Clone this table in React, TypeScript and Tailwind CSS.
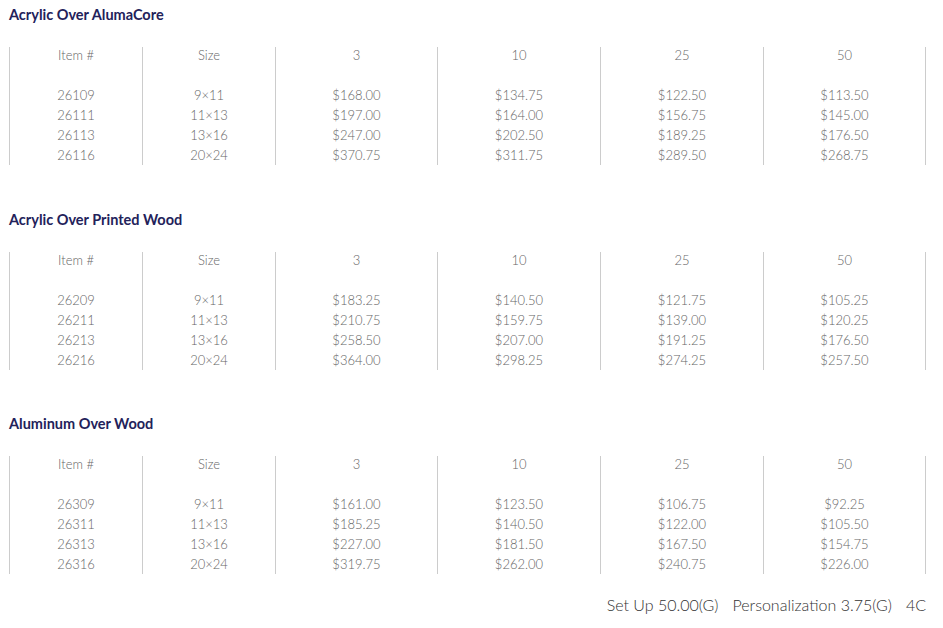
const columns = [
  { label: "Item #", w: "w-[133px]" },
  { label: "Size", w: "w-[133px]" },
  { label: "3", w: "w-[162px]" },
  { label: "10", w: "w-[163px]" },
  { label: "25", w: "w-[163px]" },
  { label: "50", w: "w-[163px]" },
];

const sections = [
  {
    title: "Acrylic Over AlumaCore",
    rows: [
      ["26109", "9×11", "$168.00", "$134.75", "$122.50", "$113.50"],
      ["26111", "11×13", "$197.00", "$164.00", "$156.75", "$145.00"],
      ["26113", "13×16", "$247.00", "$202.50", "$189.25", "$176.50"],
      ["26116", "20×24", "$370.75", "$311.75", "$289.50", "$268.75"],
    ],
  },
  {
    title: "Acrylic Over Printed Wood",
    rows: [
      ["26209", "9×11", "$183.25", "$140.50", "$121.75", "$105.25"],
      ["26211", "11×13", "$210.75", "$159.75", "$139.00", "$120.25"],
      ["26213", "13×16", "$258.50", "$207.00", "$191.25", "$176.50"],
      ["26216", "20×24", "$364.00", "$298.25", "$274.25", "$257.50"],
    ],
  },
  {
    title: "Aluminum Over Wood",
    rows: [
      ["26309", "9×11", "$161.00", "$123.50", "$106.75", "$92.25"],
      ["26311", "11×13", "$185.25", "$140.50", "$122.00", "$105.50"],
      ["26313", "13×16", "$227.00", "$181.50", "$167.50", "$154.75"],
      ["26316", "20×24", "$319.75", "$262.00", "$240.75", "$226.00"],
    ],
  },
];

function PriceTable({ title, rows }: { title: string; rows: string[][] }) {
  return (
    <section>
      <h2 className="h-5 text-[14.5px] leading-5 font-bold text-[#23225a]">{title}</h2>
      <div className="mt-[22px] flex text-[13px] font-light text-[#666666]">
        {columns.map((col, i) => (
          <div
            key={col.label}
            className={`${col.w} border-l border-[#cccccc] text-center ${
              i === columns.length - 1 ? "border-r" : ""
            }`}
          >
            <div className="h-4 leading-4">{col.label}</div>
            <div className="h-[22px]" />
            {rows.map((r) => (
              <div key={r[0]} className="h-5 leading-5">
                {r[i]}
              </div>
            ))}
          </div>
        ))}
      </div>
    </section>
  );
}

export default function App() {
  return (
    <div className="w-[943px] h-[628px] bg-white pl-[9px] pt-[5px] font-['Lato','Liberation_Sans',sans-serif]">
      <div className="w-[917px] flex flex-col gap-[44.5px]">
        {sections.map((s) => (
          <PriceTable key={s.title} title={s.title} rows={s.rows} />
        ))}
      </div>
      <div className="w-[917px] mt-[21px] flex justify-end gap-[14px] text-[16px] leading-5 font-light text-[#333333]">
        <span>Set Up 50.00(G)</span>
        <span>Personalization 3.75(G)</span>
        <span>4C</span>
      </div>
    </div>
  );
}
